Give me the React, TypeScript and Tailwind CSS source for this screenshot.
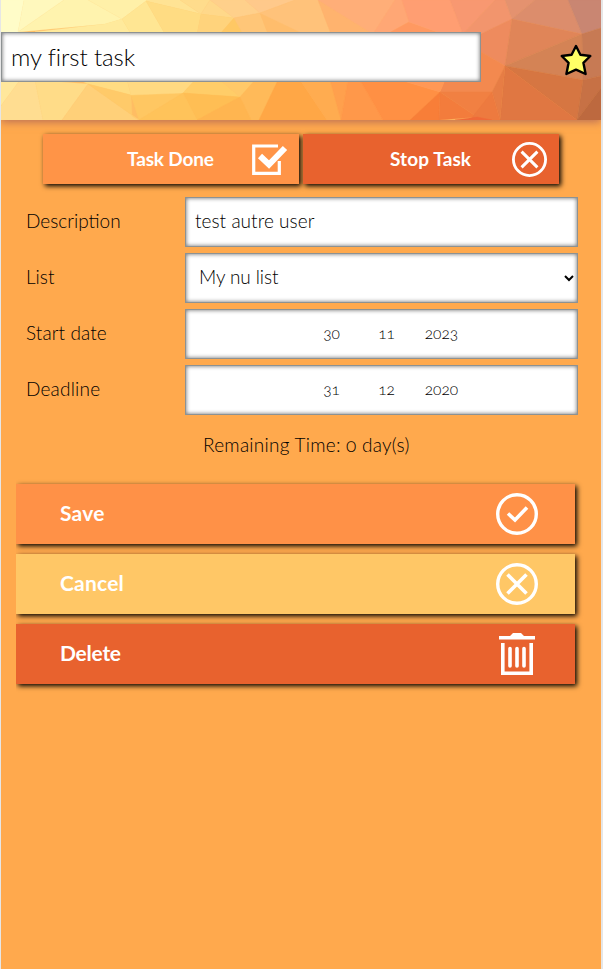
import type { ReactNode } from 'react';

const facets: [string, string][] = [
  ['0,0 24,0 18,32 0,50', '#fffcc8'],
  ['24,0 64,0 18,32', '#fff8bd'],
  ['64,0 88,0 122,19 105,24 18,32', '#fff3ae'],
  ['88,0 146,0 146,1 122,19', '#fff0a8'],
  ['105,24 122,19 131,34 100,34 35,32', '#ffea9c'],
  ['122,19 146,1 165,34 131,34', '#ffe693'],
  ['146,0 180,0 201,14 146,1', '#ffe394'],
  ['146,1 201,14 197,34 165,34', '#ffdc83'],
  ['180,0 210,0 201,14', '#ffdc8c'],
  ['210,0 234,18 201,14', '#ffd88a'],
  ['201,14 234,18 220,34 197,34', '#ffd37c'],
  ['234,18 243,34 220,34', '#ffc864'],
  ['210,0 245,0 260,13 234,18', '#ffd08b'],
  ['245,0 295,0 260,13', '#ffc98b'],
  ['234,18 260,13 268,34 243,34', '#ffc678'],
  ['260,13 304,34 268,34', '#ffbd6c'],
  ['295,0 318,0 331,34 304,34 260,13', '#ffc27a'],
  ['318,0 373,34 331,34', '#ffb36e'],
  ['318,0 395,0 373,34', '#ffae78'],
  ['395,0 402,0 409,22 387,34 373,34', '#ffa775'],
  ['387,34 409,22 443,34', '#ff9961'],
  ['402,0 450,0 463,34 443,34 409,22', '#ff9e72'],
  ['450,0 495,0 463,34', '#f89871'],
  ['495,0 505,0 512,19 481,34 463,34', '#f2956d'],
  ['505,0 535,0 512,19', '#e4926f'],
  ['535,0 568,0 582,34 512,19', '#dc8d6c'],
  ['568,0 601,0 601,28 582,34', '#c98672'],
  ['512,19 505,66 481,52 481,34', '#ee8b5e'],
  ['512,19 582,34 505,66', '#e08558'],
  ['505,66 582,34 583,80', '#d48355'],
  ['582,34 601,28 601,76 583,80', '#c77a54'],
  ['505,66 583,80 577,120', '#d67642'],
  ['583,80 601,76 601,88 577,120', '#c77145'],
  ['577,120 601,88 601,120', '#bd693f'],
  ['505,66 577,120 500,120', '#e07742'],
  ['481,52 505,66 492,92 440,92 445,80 481,80', '#f3894f'],
  ['505,66 500,120 492,92', '#e77d45'],
  ['0,80 20,80 0,107', '#ffe79b'],
  ['20,80 35,80 43,120 0,120 0,107', '#ffdd91'],
  ['35,80 88,84 62,120 43,120', '#ffdc88'],
  ['88,84 139,120 62,120', '#ffd079'],
  ['80,80 127,80 131,95 88,84', '#ffdc82'],
  ['88,84 131,95 132,116 139,120', '#ffca69'],
  ['131,95 183,93 139,120', '#ffc762'],
  ['127,80 195,80 183,93 131,95', '#ffd981'],
  ['183,93 195,80 220,80 240,97', '#ffcd68'],
  ['183,93 240,97 197,120', '#ffbe54'],
  ['183,93 197,120 139,120', '#ffc35a'],
  ['220,80 255,80 240,97', '#ffc969'],
  ['255,80 278,80 259,120 251,120 240,97', '#ffba59'],
  ['240,97 251,120 197,120', '#ffb550'],
  ['278,80 300,80 327,120 259,120', '#ffa746'],
  ['300,80 330,80 341,120 327,120', '#ffac50'],
  ['330,80 348,80 341,120', '#ffa04d'],
  ['348,80 360,80 383,120 341,120', '#ff984a'],
  ['360,80 400,80 440,92 410,120 383,120', '#ff9044'],
  ['400,80 445,80 440,92', '#ff9856'],
  ['440,92 439,120 410,120', '#f87e38'],
  ['440,92 477,117 439,120', '#f37c3c'],
  ['440,92 492,92 477,117', '#f18042'],
  ['492,92 500,120 470,120', '#ed7a3f'],
  ['455,120 477,117 492,120', '#ef6938'],
];

const field =
  'border border-[#8d9293] bg-white shadow-[inset_0_0_4px_rgba(0,0,0,0.6)]';
const shadow = 'shadow-[2px_2px_5px_#000]';

function Row({ label, spacing, children }: { label: string; spacing: string; children: ReactNode }) {
  return (
    <div className="flex h-[50px] items-center">
      <label className={`w-[159px] pb-[2px] text-[19px] ${spacing}`}>{label}</label>
      {children}
    </div>
  );
}

function DateBox({ day, month, year }: { day: string; month: string; year: string }) {
  return (
    <div className={`flex h-[50px] w-[393px] items-center pl-[118px] text-[15.5px] [font-feature-settings:'onum'] ${field}`}>
      <span className="w-[55px] text-center">{day}</span>
      <span className="w-[55px] text-center">{month}</span>
      <span className="w-[55px] text-center">{year}</span>
    </div>
  );
}

function CircleX({ size }: { size: number }) {
  return (
    <svg width={size} height={size} viewBox="0 0 42 42" fill="none" stroke="white">
      <circle cx="21" cy="21" r="19.3" strokeWidth="3.4" />
      <path d="M11.5 11.5 30.5 30.5M30.5 11.5 11.5 30.5" strokeWidth="3.6" />
    </svg>
  );
}

function Action({ label, color, spacing, children }: { label: string; color: string; spacing: string; children: ReactNode }) {
  return (
    <button className={`flex h-[60px] w-[559px] items-center justify-between pl-[44px] pr-[37px] text-[21px] font-bold text-white ${shadow} ${color}`}>
      <span className={`pb-[3px] ${spacing}`}>{label}</span>
      {children}
    </button>
  );
}

export default function App() {
  return (
    <div className="h-[969px] w-[603px] overflow-hidden border-l border-r-2 border-[#e6e6e6] bg-[#ffa94d] font-['Lato',sans-serif] font-light text-black">
      <header className="relative h-[120px] shadow-[0_2px_8px_rgba(150,80,90,0.65)]">
        <svg className="absolute inset-0" width="600" height="120" viewBox="1 0 600 120" shapeRendering="geometricPrecision">
          <rect width="603" height="120" fill="#ffbd63" />
          {facets.map(([points, fill]) => (
            <polygon key={points} points={points} fill={fill} stroke={fill} strokeWidth="0.4" />
          ))}
        </svg>
        <div className="relative flex h-[120px] pt-8">
          <div className={`flex h-[50px] w-[480px] items-center pl-[9px] text-[24px] tracking-[-0.1px] ${field}`}>
            my first task
          </div>
          <svg className="ml-[79px] mt-[11px]" width="32" height="34" viewBox="0 0 32 34">
            <path d="M16 3 20.4 11.8 30.3 13 23.4 19.8 25.6 31 16 26.6 6.4 31 8.6 19.8 1.7 13 11.6 11.8Z" fill="#ffff66" stroke="#000" strokeWidth="2.4" strokeLinejoin="round" />
          </svg>
        </div>
      </header>

      <div className="mt-[14px] flex gap-1 pl-[42px] text-[19px] font-bold text-white">
        <button className={`flex h-[50px] w-64 items-center bg-[#ff9447] pl-[84px] ${shadow}`}>
          <span className="w-[125px] text-left tracking-[-0.15px]">Task Done</span>
          <svg width="36" height="32" viewBox="0 0 36 32" fill="none" stroke="white">
            <path d="M26 3H1.7V30.3H27.3V18" strokeWidth="3.2" />
            <path d="M8 13 17 21.5 33 5" strokeWidth="6" />
          </svg>
        </button>
        <button className={`flex h-[50px] w-64 items-center bg-[#e8622e] pl-[87px] ${shadow}`}>
          <span className="w-[122px] text-left tracking-[0.1px]">Stop Task</span>
          <CircleX size={35} />
        </button>
      </div>

      <div className="mt-[13px] flex flex-col gap-1.5 pl-[25px]">
        <Row label="Description" spacing="tracking-[0px]">
          <div className={`flex h-[50px] w-[393px] items-center pb-[1px] pl-[9px] text-[19px] tracking-[0.05px] ${field}`}>test autre user</div>
        </Row>
        <Row label="List" spacing="tracking-[0px]">
          <div className={`flex h-[50px] w-[393px] items-center justify-between pl-[13px] pr-[3px] text-[19px] tracking-[-0.1px] ${field}`}>
            <span className="pb-[1px]">My nu list</span>
            <svg width="10" height="7" viewBox="0 0 10 7" fill="none" stroke="black" strokeWidth="2"><path d="M1 1 5 5 9 1" /></svg>
          </div>
        </Row>
        <Row label="Start date" spacing="tracking-[0.1px]">
          <DateBox day="30" month="11" year="2023" />
        </Row>
        <Row label="Deadline" spacing="tracking-[0.2px]">
          <DateBox day="31" month="12" year="2020" />
        </Row>
      </div>

      <div className="mt-[18px] h-[24px] pl-[202px] text-[19px] leading-[24px] tracking-[0.25px] [font-feature-settings:'onum']">Remaining Time: 0 day(s)</div>

      <div className="ml-[15px] mt-[27px] flex flex-col gap-2.5 [clip-path:inset(-10px_-10px_-10px_0)]">
        <Action label="Save" color="bg-[#ff9147]" spacing="tracking-[0.2px]">
          <svg width="42" height="42" viewBox="0 0 42 42" fill="none" stroke="white">
            <circle cx="21" cy="21" r="19.3" strokeWidth="3.4" />
            <path d="M12 20.5 19 27 31 14.5" strokeWidth="3.6" />
          </svg>
        </Action>
        <Action label="Cancel" color="bg-[#ffc766]" spacing="tracking-[0.2px]">
          <CircleX size={42} />
        </Action>
        <Action label="Delete" color="bg-[#e8622e]" spacing="tracking-[-0.25px]">
          <svg className="mr-[3px]" width="36" height="42" viewBox="0 0 36 42" fill="none" stroke="white">
            <path d="M0 3H11L14 0H22L25 3H36V6.5H0Z" fill="white" stroke="none" />
            <path d="M3.8 10V40.2H32.2V10" strokeWidth="3.6" />
            <path d="M11 15.5V33M18 15.5V33M25 15.5V33" strokeWidth="3.6" strokeLinecap="round" />
          </svg>
        </Action>
      </div>
    </div>
  );
}
